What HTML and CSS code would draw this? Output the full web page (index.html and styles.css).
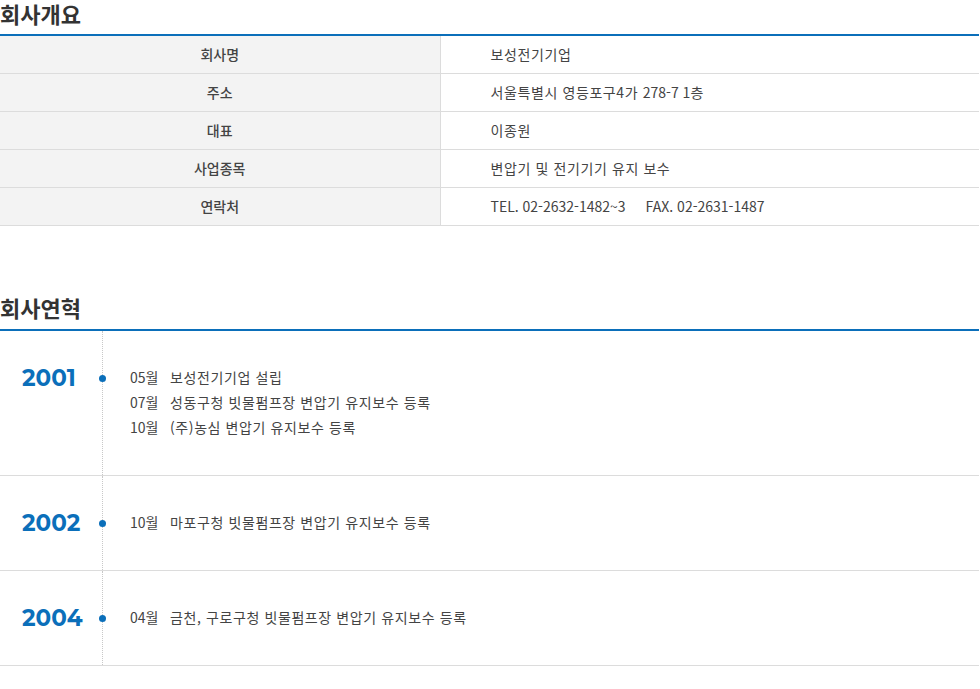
FILE: index.html
```html
<!DOCTYPE html>
<html lang="ko">
<head>
<meta charset="utf-8">
<title>회사소개</title>
<link rel="stylesheet" href="styles.css">
</head>
<body>
<section class="sec">
  <h2 class="sec-title">회사개요</h2>
  <table class="info">
    <tr><th>회사명</th><td>보성전기기업</td></tr>
    <tr><th>주소</th><td>서울특별시 영등포구4가 <span class="num">278-7 1</span>층</td></tr>
    <tr><th>대표</th><td>이종원</td></tr>
    <tr><th>사업종목</th><td>변압기 및 전기기기 유지 보수</td></tr>
    <tr><th>연락처</th><td><span class="num">TEL. 02-2632-1482~3</span><span class="gap"></span><span class="num">FAX. 02-2631-1487</span></td></tr>
  </table>
</section>
<section class="sec sec-history">
  <h2 class="sec-title">회사연혁</h2>
  <div class="history">
    <div class="year-row">
      <div class="year">2001</div>
      <div class="axis"><span class="dot"></span></div>
      <ul class="events">
        <li><span class="month">05월</span>보성전기기업 설립</li>
        <li><span class="month">07월</span>성동구청 빗물펌프장 변압기 유지보수 등록</li>
        <li><span class="month">10월</span>(주)농심 변압기 유지보수 등록</li>
      </ul>
    </div>
    <div class="year-row">
      <div class="year">2002</div>
      <div class="axis"><span class="dot"></span></div>
      <ul class="events">
        <li><span class="month">10월</span>마포구청 빗물펌프장 변압기 유지보수 등록</li>
      </ul>
    </div>
    <div class="year-row">
      <div class="year">2004</div>
      <div class="axis"><span class="dot"></span></div>
      <ul class="events">
        <li><span class="month">04월</span>금천, 구로구청 빗물펌프장 변압기 유지보수 등록</li>
      </ul>
    </div>
  </div>
</section>
</body>
</html>
```
FILE: styles.css
```css
* { box-sizing: border-box; }
html, body { margin: 0; padding: 0; background: #fff; }
body {
  font-family: "Noto Sans CJK KR", "Noto Sans", sans-serif;
  color: #444;
  font-size: 14px;
  width: 980px;
}
.sec-title {
  margin: 0;
  padding-top: 1px;
  font-size: 22px;
  font-weight: 700;
  color: #333;
  line-height: 24px;
  height: 34px;
}
.sec-history { margin-top: 68px; }
.sec-history .sec-title { height: 35px; line-height: 26px; padding-top: 0; }
.info {
  width: 979px;
  border-collapse: collapse;
  border-top: 2px solid #0b6fba;
}
.info th, .info td {
  height: 38px;
  border-bottom: 1px solid #dcdcdc;
  font-size: 14px;
  padding: 0;
  line-height: 20px;
}
.info th {
  width: 440px;
  background: #f3f3f3;
  font-weight: 500;
  color: #444;
  border-right: 1px solid #dcdcdc;
  text-align: center;
}
.info td {
  padding-left: 50px;
  color: #444;
  letter-spacing: 0.6px;
}
.num { letter-spacing: 0; }
.gap { display: inline-block; width: 20px; }
.history {
  border-top: 2px solid #0b6fba;
  width: 979px;
}
.year-row {
  display: flex;
  align-items: flex-start;
  border-bottom: 1px solid #dcdcdc;
}
.year {
  width: 102px;
  padding-left: 22px;
  padding-top: 33px;
  font-family: "Montserrat", "Lato", "Noto Sans", sans-serif;
  font-weight: 700;
  font-size: 23px;
  line-height: 28px;
  color: #0b6fba;
}
.axis {
  align-self: stretch;
  width: 1px;
  border-left: 1px dotted #c8c8c8;
  position: relative;
}
.dot {
  position: absolute;
  left: -4px;
  top: 44px;
  width: 7px;
  height: 7px;
  border-radius: 50%;
  background: #0b6fba;
}
.events {
  list-style: none;
  margin: 0;
  padding: 34px 0 35px 27px;
}
.events li {
  line-height: 25px;
  font-size: 14px;
  color: #444;
  letter-spacing: 0.6px;
}
.month { display: inline-block; width: 40px; letter-spacing: 0; }
```
